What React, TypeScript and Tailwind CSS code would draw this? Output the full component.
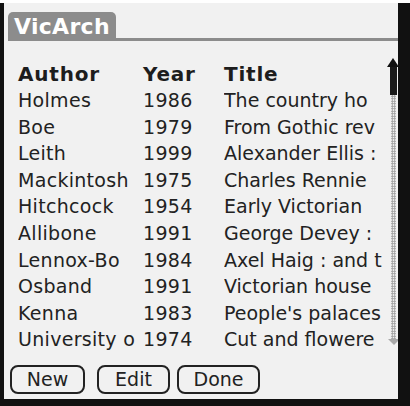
const ROWS = [
  ["Holmes", "1986", "The country ho"],
  ["Boe", "1979", "From Gothic rev"],
  ["Leith", "1999", "Alexander Ellis :"],
  ["Mackintosh", "1975", "Charles Rennie"],
  ["Hitchcock", "1954", "Early Victorian"],
  ["Allibone", "1991", "George Devey :"],
  ["Lennox-Bo", "1984", "Axel Haig : and t"],
  ["Osband", "1991", "Victorian house"],
  ["Kenna", "1983", "People's palaces"],
  ["University o", "1974", "Cut and flowere"],
];

const font = { fontFamily: '"DejaVu Sans", sans-serif' };

function ScrollBar() {
  return (
    <div className="absolute left-[383px] top-[55px] flex w-[12px] flex-col items-center">
      <svg width="12" height="9" viewBox="0 0 12 9">
        <polygon points="6,0 12,9 0,9" fill="#111" />
      </svg>
      <div className="h-[28px] w-[7px] bg-[#1a1a1a]" />
      <div
        className="h-[244px] w-[5px]"
        style={{
          backgroundImage:
            "radial-gradient(circle, #9a9a9a 0.9px, transparent 1.1px)",
          backgroundSize: "2.5px 2.5px",
        }}
      />
      <svg width="12" height="6" viewBox="0 0 12 6" className="ml-[2px]">
        <polygon points="0,0 12,0 6,6" fill="#a8a8a8" />
      </svg>
    </div>
  );
}

export default function App() {
  return (
    <div className="h-[406px] w-[410px] bg-[#111]" style={font}>
      <div className="relative ml-[4px] mt-[3px] h-[396px] w-[394px] overflow-hidden bg-[#f1f1f1] text-[#1d1d1d]">
        {/* title tab */}
        <div className="flex items-end pl-[4px] pt-[9px]">
          <div className="flex h-[29px] w-[108px] items-center rounded-t-[5px] bg-[#8c8c8c] pl-[6px] text-[22px] font-bold leading-none tracking-[0.3px] text-white">
            VicArch
          </div>
          <div className="h-[3px] w-[282px] bg-[#8c8c8c]" />
        </div>

        <div className="pl-[14px] pt-[19px]">
          <div className="flex h-[27px] items-center text-[20px] font-bold leading-normal tracking-[0.8px]">
            <div className="w-[125px]">Author</div>
            <div className="w-[81px]">Year</div>
            <div>Title</div>
          </div>
          {ROWS.map((r) => (
            <div
              key={r[0]}
              className="flex h-[26.6px] items-center whitespace-nowrap text-[19px] leading-normal text-[#222]"
            >
              <div className="w-[125px] overflow-hidden tracking-[0.3px]">{r[0]}</div>
              <div className="w-[81px] tracking-[0.3px]">{r[1]}</div>
              <div className="w-[161px] overflow-hidden">{r[2]}</div>
            </div>
          ))}
        </div>

        <ScrollBar />

        <div className="mt-[12px] flex gap-[12px] pl-[6px] text-[19px] leading-normal text-[#222]">
          <button className="flex h-[29px] w-[75px] items-center justify-center rounded-[8px] border-2 border-[#222]">
            New
          </button>
          <button className="flex h-[29px] w-[73px] items-center justify-center rounded-[8px] border-2 border-[#222]">
            Edit
          </button>
          <button className="-ml-[5px] flex h-[29px] w-[83px] items-center justify-center rounded-[8px] border-2 border-[#222]">
            Done
          </button>
        </div>
      </div>
    </div>
  );
}
